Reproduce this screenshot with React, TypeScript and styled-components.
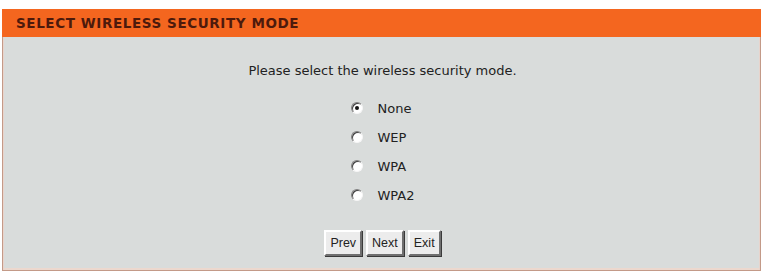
import React from "react";
import styled, { createGlobalStyle } from "styled-components";

const Global = createGlobalStyle`
  html, body { margin: 0; padding: 0; background: #ffffff; }
  body { font-family: Tahoma, "DejaVu Sans", Verdana, sans-serif; }
`;

const Page = styled.div`
  padding: 9px 4px 0 2px;
`;

const Panel = styled.div`
  height: 262px;
  background: #d9dcdb;
  border: 1px solid #c39a88;
  border-top: none;
  box-sizing: border-box;
  display: flex;
  flex-direction: column;
  box-shadow: inset 1px 0 0 #e8d4cc, inset -1px 0 0 #e8d4cc, inset 0 -2px 0 #ecd8ce;
`;

const Header = styled.div`
  height: 28px;
  background: #f4661f;
  display: flex;
  align-items: center;
  padding-left: 14px;
  margin: 0 -1px;
  font-family: "DejaVu Sans", Verdana, sans-serif;
  font-weight: bold;
  font-size: 13.5px;
  letter-spacing: 0.6px;
  color: #4d1a0c;
`;

const Body = styled.div`
  display: flex;
  flex-direction: column;
  align-items: center;
  padding-top: 26px;
`;

const Prompt = styled.div`
  font-family: "DejaVu Sans", Tahoma, sans-serif;
  font-size: 13px;
  color: #222;
  margin-left: 2px;
`;

const RadioList = styled.div`
  display: flex;
  flex-direction: column;
  gap: 15px;
  margin-top: 23px;
  width: 76px;
  margin-left: 14px;
`;

const RadioRow = styled.label`
  display: flex;
  align-items: center;
  gap: 15px;
  font-family: "DejaVu Sans", Tahoma, sans-serif;
  font-size: 13px;
  color: #222;
  height: 14px;
`;

const RadioDot = styled.span<{ $checked?: boolean }>`
  width: 12px;
  height: 12px;
  border-radius: 50%;
  box-sizing: border-box;
  border: 1px solid;
  border-color: #808080 #f6f6f6 #f6f6f6 #808080;
  background: #ffffff;
  box-shadow: inset 1px 1px 0 #404040;
  position: relative;
  flex: none;
  &::after {
    content: "";
    display: ${(p) => (p.$checked ? "block" : "none")};
    position: absolute;
    left: 3px;
    top: 3px;
    width: 4px;
    height: 4px;
    border-radius: 50%;
    background: #111;
  }
`;

const Buttons = styled.div`
  display: flex;
  gap: 4px;
  margin-top: 28px;
  margin-left: 2px;
`;

const Button = styled.button`
  height: 26px;
  padding: 0 4px;
  background: #ececec;
  border: 2px solid;
  border-color: #ffffff #6f6f6f #6f6f6f #ffffff;
  box-shadow: 1px 1px 0 #3a3a3a;
  font-family: "Liberation Sans", Arial, sans-serif;
  font-size: 12.5px;
  color: #222;
`;

const options = ["None", "WEP", "WPA", "WPA2"];

export default function App() {
  return (
    <Page>
      <Global />
      <Panel>
        <Header>SELECT WIRELESS SECURITY MODE</Header>
        <Body>
          <Prompt>Please select the wireless security mode.</Prompt>
          <RadioList>
            {options.map((o, i) => (
              <RadioRow key={o}>
                <RadioDot $checked={i === 0} />
                {o}
              </RadioRow>
            ))}
          </RadioList>
          <Buttons>
            <Button>Prev</Button>
            <Button>Next</Button>
            <Button>Exit</Button>
          </Buttons>
        </Body>
      </Panel>
    </Page>
  );
}
